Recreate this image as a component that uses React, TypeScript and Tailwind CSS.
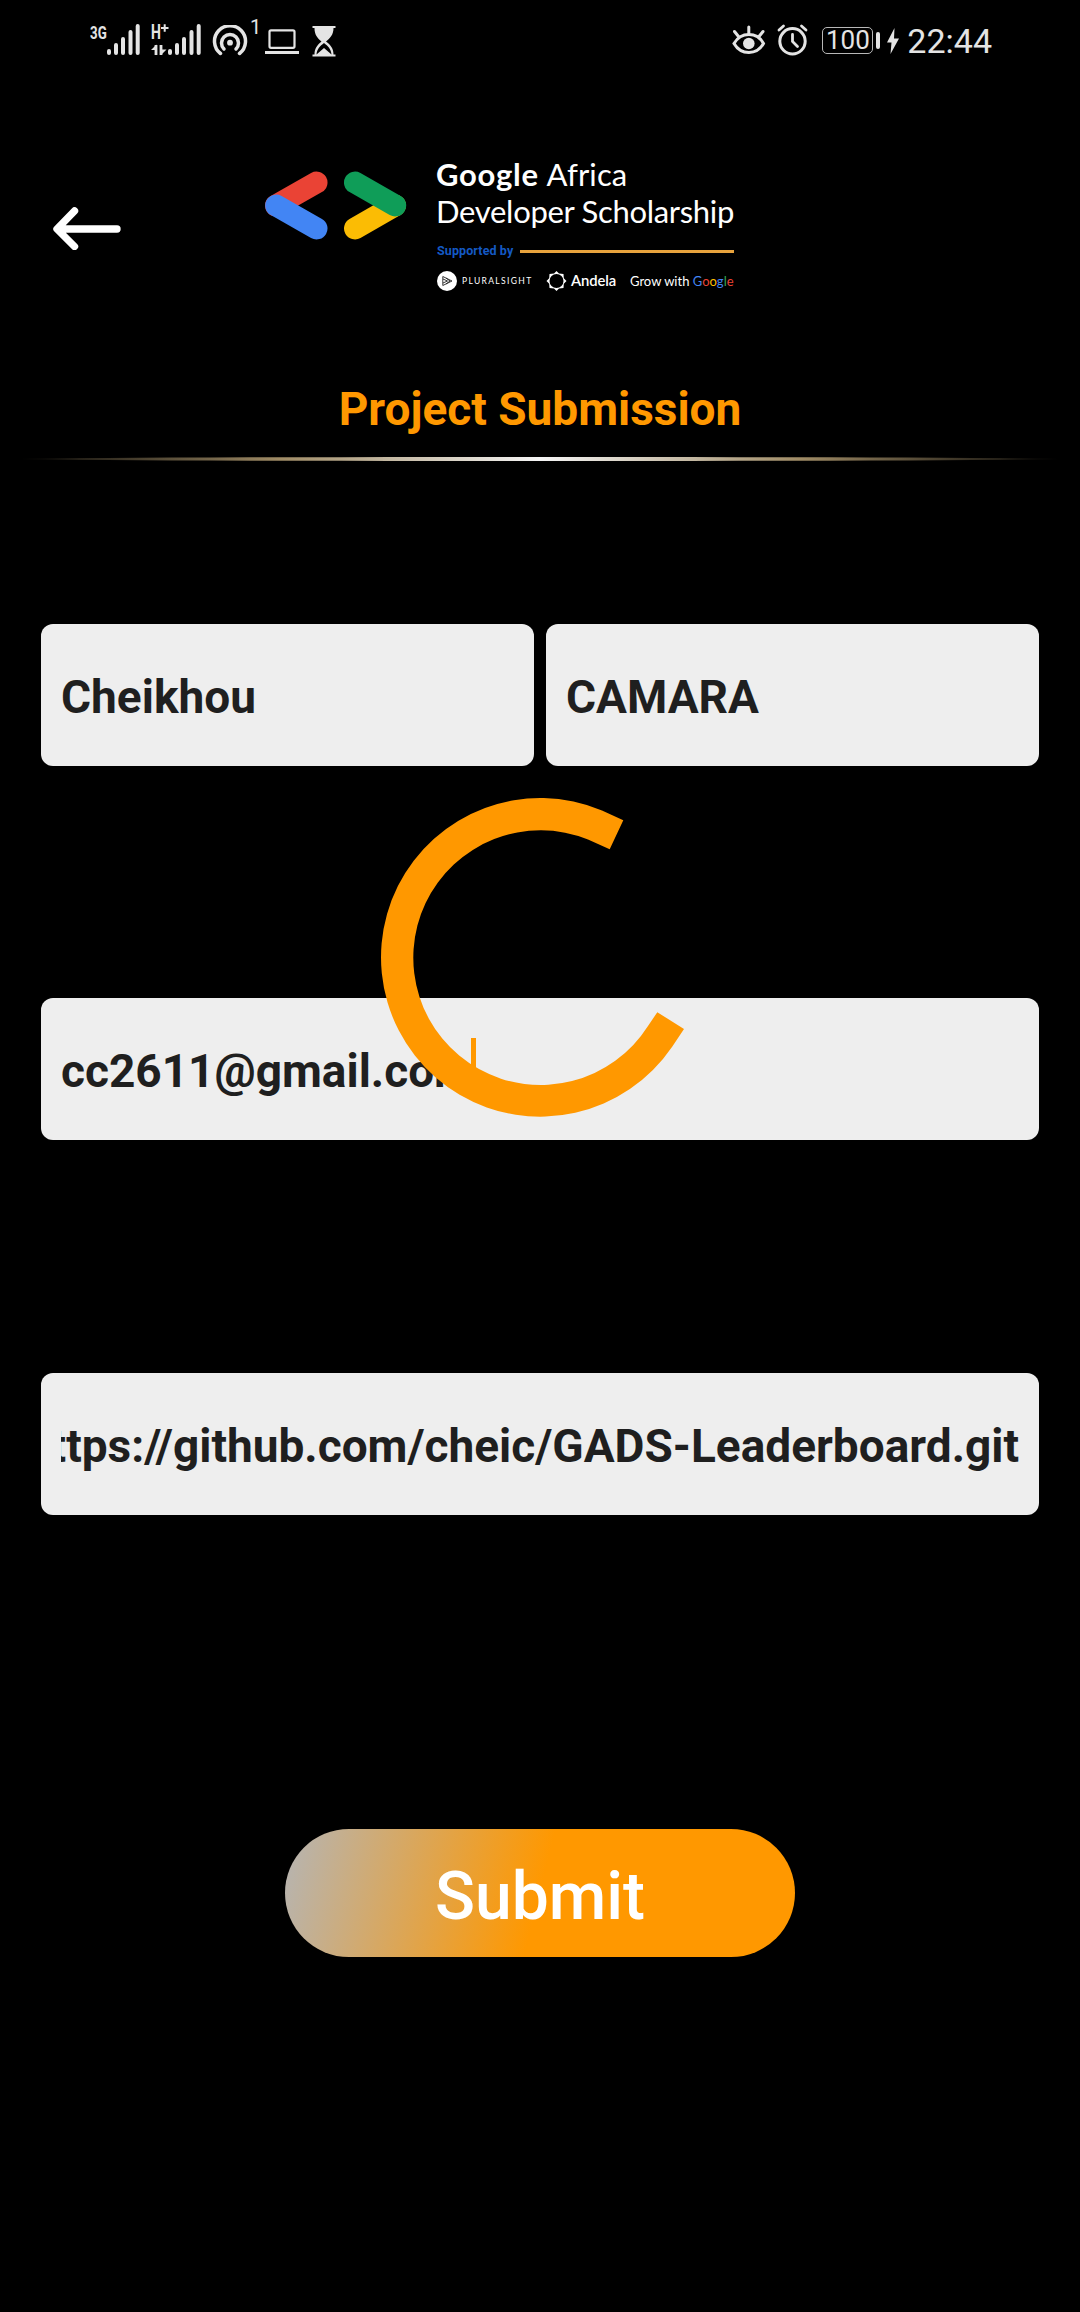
import React from "react";

const INK = "#e4e4e4";

function Signal({ className }: { className?: string }) {
  return (
    <svg className={className} width="33" height="31" viewBox="0 0 33 31" stroke={INK} strokeWidth="4" strokeLinecap="round">
      <path d="M2 27v2M9 21v8M16 15v14M23.500 8v21M30.700 2v27" />
    </svg>
  );
}

function StatusBar() {
  return (
    <div className="flex h-20 items-start justify-between pl-[90px] pr-[88px] text-[#e4e4e4]">
      <div className="flex">
        <div className="relative mt-6 h-8 w-[50px]">
          <span className="absolute left-0 top-[-1px] origin-left scale-x-70 font-[Roboto] text-[19px] leading-[19px] font-bold">3G</span>
          <Signal className="absolute left-[17px] top-0" />
        </div>
        <div className="relative ml-[11px] mt-6 h-8 w-[50px]">
          <span className="absolute left-0 top-[-1px] origin-left scale-x-70 font-[Roboto] text-[20px] leading-[19px] font-bold">H</span>
          <svg className="absolute left-0 top-0" width="18" height="32" viewBox="0 0 18 32" stroke={INK} fill="none">
            <path strokeWidth="2" d="M10 4h7.500M13.700 .3v7.500" />
            <path strokeWidth="2.800" d="M5 21v10M10 21v10" />
            <path fill={INK} stroke="none" d="M5.500 20.500L0 26h5.500zM10 31l5.500-5.500h-5.500z" />
          </svg>
          <Signal className="absolute left-[17px] top-0" />
        </div>
        <svg className="ml-[11px] mt-[25px]" width="36" height="32" viewBox="0 0 36 32" fill="none" stroke={INK} strokeWidth="3.500" strokeLinecap="round">
          <path d="M8.500 28.500a15.500 15.500 0 1 1 19 0" />
          <path d="M12 24a8.500 8.500 0 1 1 12 0" />
          <circle cx="18" cy="17.700" r="2.900" fill={INK} stroke="none" />
        </svg>
        <span className="ml-[2px] mt-[17px] w-[15px] font-[Roboto] text-[20px] leading-[20px]">1</span>
        <svg className="mt-7" width="34" height="28" viewBox="0 0 34 28" fill="none" stroke={INK}>
          <rect x="4.500" y="2.300" width="25" height="17.500" rx="1.500" strokeWidth="2.200" />
          <path strokeWidth="2.800" d="M0 24.500h34" />
        </svg>
        <svg className="ml-[13px] mt-[26px]" width="24" height="31" viewBox="0 0 24 31" fill={INK}>
          <path d="M.5 0h23v2h-2c0 7-3.500 10-7.500 13.500C18.500 19 21.500 22 21.500 28.500h2v2H.5v-2h2C2.500 22 5.500 19 9.500 15.500C5.500 12 2.500 9 2.500 2H.5z" />
          <path fill="#000" d="M12 17c4 3 7 6 7.500 11.500L12 22l-7.500 6.500C5 23 8 20 12 17z" />
        </svg>
      </div>
      <div className="flex items-start">
        <svg className="mt-[25px]" width="34" height="30" viewBox="0 0 34 30" fill="none" stroke={INK} strokeWidth="3" strokeLinecap="round">
          <path d="M2 18.500C9 6.500 25 6.500 31.500 18.500C25 30.500 9 30.500 2 18.500z" />
          <circle cx="16.800" cy="18.500" r="5.800" fill={INK} stroke="none" />
          <path d="M16.800 2v6M2.500 6.500l4 5M31 6.500l-4 5" />
        </svg>
        <svg className="ml-[11px] mt-[24px]" width="32" height="32" viewBox="0 0 32 32" fill="none" stroke={INK} strokeLinecap="round">
          <circle cx="15.500" cy="17.300" r="12.700" strokeWidth="3" />
          <path strokeWidth="2.800" d="M15.500 10.500v7l5 5M2 6l4.500-4M29 6l-4.500-4" />
        </svg>
        <div className="ml-[13px] mt-[27px] flex items-center">
          <div className="flex h-[27px] w-[51px] items-center justify-center rounded-[5px] border-[1.500px] border-[#b8b8b8] font-[Roboto] text-[26px] leading-[26px]">
            <span className="-mt-px">100</span>
          </div>
          <div className="ml-[3px] h-[17px] w-[4px] rounded-sm bg-[#e4e4e4]" />
        </div>
        <svg className="ml-[7px] mt-[28px]" width="12" height="26" viewBox="0 0 12 26" fill={INK}>
          <path d="M7.500 0L0 14.500h4.500L3.500 26L12 10.500H7z" />
        </svg>
        <span className="ml-2 mt-[23px] font-[Roboto] text-[34px] leading-[36px]">22:44</span>
      </div>
    </div>
  );
}

function BracketLogo() {
  return (
    <svg className="mt-[21px] ml-[144px] shrink-0" width="142" height="70" viewBox="0 0 142 70" strokeWidth="22" strokeLinecap="round">
      <path stroke="#ea4335" d="M11 34.500L51.500 11.500" />
      <path stroke="#4285f4" d="M11.200 34.500L51.500 57.500" />
      <path stroke="#fbbc04" d="M130 34.500L90 57.500" />
      <path stroke="#0f9d58" d="M90 11.500L130.200 34.500" />
    </svg>
  );
}

function Header() {
  return (
    <header className="flex h-[155px] items-start pl-[53px] pt-[70px]">
      <svg className="mt-[56px] shrink-0" width="68" height="44" viewBox="0 0 68 44" fill="none" stroke="#fff" strokeWidth="7.400" strokeLinecap="round" strokeLinejoin="round">
        <path d="M64 23H5M21.500 5L4 23l17.500 17.500" />
      </svg>
      <BracketLogo />
      <div className="ml-[29px] mt-[5px] w-[305px] shrink-0 font-[Lato] text-white">
        <div className="h-[37px] text-[31px] leading-[38px] whitespace-nowrap">
          <b className="tracking-[0.700px]">Google</b> <span className="tracking-[0.100px]">Africa</span>
        </div>
        <div className="h-[38px] text-[31px] leading-[38px] tracking-[-0.300px] whitespace-nowrap">Developer Scholarship</div>
        <div className="mt-[13px] flex h-4 items-center">
          <span className="w-[84px] pl-px font-[Roboto] text-[12.500px] leading-4 font-bold tracking-[0.100px] whitespace-nowrap text-[#1459c4]">Supported by</span>
          <div className="h-[3px] w-[214px] bg-[#e8a33d]" />
        </div>
        <div className="mt-[12px] flex h-5 items-center pl-px whitespace-nowrap">
          <svg width="20" height="20" viewBox="0 0 20 20">
            <circle cx="10" cy="10" r="10" fill="#fff" />
            <path d="M5.800 5.500l9.200 4.500l-9.200 4.500zM6 8l4.500 2l-4.500 2M9 7l4 3l-4 3" fill="none" stroke="#222" strokeWidth=".9" />
          </svg>
          <span className="ml-[5px] w-[72px] font-[Lato] text-[8.500px] tracking-[1.350px]">PLURALSIGHT</span>
          <svg className="ml-[12px]" width="21" height="20" viewBox="-10.500 -10 21 20">
            <path
              fill="#fff"
              fillRule="evenodd"
              d="M0-10L2.500-7.500L7-7L7.300-2.700L10 0L7.300 2.700L7 7L2.500 7.500L0 10L-2.500 7.500L-7 7L-7.300 2.700L-10 0L-7.300-2.700L-7-7L-2.500-7.500zM0-7a7 7 0 1 0 0 14a7 7 0 1 0 0-14z"
            />
          </svg>
          <span className="-mt-[2px] ml-[4px] w-[59px] text-[14.800px] font-semibold tracking-[-0.100px]">Andela</span>
          <span className="mt-[2px] text-[13px]">
            Grow with <span className="text-[#4285f4]">G</span>
            <span className="text-[#ea4335]">o</span>
            <span className="text-[#fbbc04]">o</span>
            <span className="text-[#4285f4]">g</span>
            <span className="text-[#34a853]">l</span>
            <span className="text-[#ea4335]">e</span>
          </span>
        </div>
      </div>
    </header>
  );
}

function Field({ children }: { children: React.ReactNode }) {
  return (
    <div className="flex h-[142px] min-w-0 flex-1 items-center rounded-[12px] bg-[#eeeeee] px-5 pt-1 font-[Roboto] text-[46px] leading-[56px] font-bold text-[#1f1f1f]">
      {children}
    </div>
  );
}

function Spinner() {
  return (
    <svg className="absolute left-[380px] top-[797px]" width="320" height="322" viewBox="380 797 320 322" fill="#ff9800">
      <path d="M623.300 820.300L602 810.500A159.300 159.300 0 1 0 672 1047L684 1029L657.300 1012.200L648 1026A127.300 127.300 0 1 1 588 839.500L609.700 849.200z" />
    </svg>
  );
}

export default function App() {
  return (
    <div className="relative h-[2312px] w-[1080px] overflow-hidden bg-black">
      <StatusBar />
      <Header />
      <h1 className="mt-[146px] text-center font-[Roboto] text-[46px] leading-[56px] font-bold text-[#ff9800]">Project Submission</h1>
      <div className="mx-5 mt-[20px] h-[4px] rounded-[50%] bg-[linear-gradient(90deg,#000_0%,#a08c66_25%,#f5f5f5_50%,#a08c66_75%,#000_100%)]" />
      <main className="px-[41px] pt-[163px]">
        <div className="flex gap-3">
          <Field>Cheikhou</Field>
          <Field>CAMARA</Field>
        </div>
        <div className="mt-[232px] flex">
          <Field>
            cc2611@gmail.com
            <i className="-mt-2 -ml-[3px] h-[58px] w-[5px] bg-[#ff9800]" />
          </Field>
        </div>
        <div className="mt-[233px] flex">
          <Field>
            <div className="flex w-full justify-end overflow-hidden whitespace-nowrap">https://github.com/cheic/GADS-Leaderboard.git</div>
          </Field>
        </div>
        <button className="mx-auto mt-[314px] flex h-[128px] w-[510px] items-center justify-center rounded-full bg-[linear-gradient(104deg,#b5b5b5_0%,#ff9800_50%)] pt-[6px] font-[Roboto] text-[66px] font-medium text-white">
          Submit
        </button>
      </main>
      <Spinner />
    </div>
  );
}
